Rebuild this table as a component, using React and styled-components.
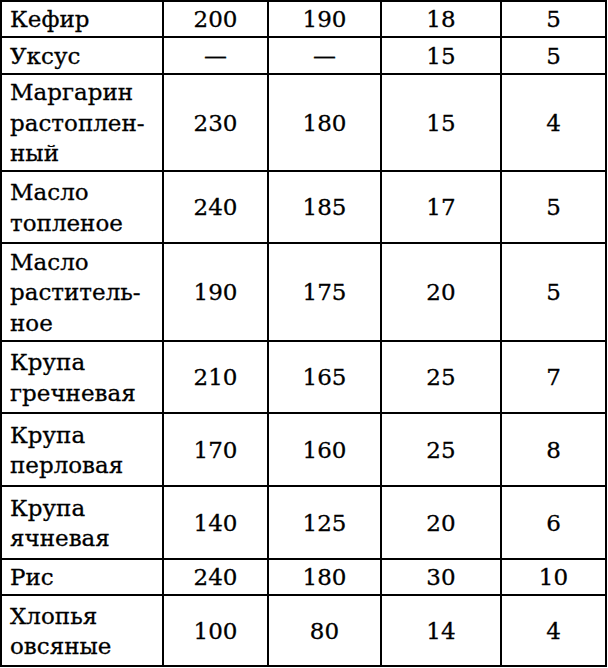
import React from 'react';
import styled, { createGlobalStyle } from 'styled-components';

const GlobalStyle = createGlobalStyle`
  html, body {
    margin: 0;
    padding: 0;
    background: #fff;
  }
`;

const Table = styled.table`
  border-collapse: collapse;
  table-layout: fixed;
  width: 607px;
  font-family: "DejaVu Serif", "Liberation Serif", serif;
  font-size: 23px;
  line-height: 30.5px;
  color: #000;
  -webkit-text-stroke: 0.3px #000;
`;

const Row = styled.tr`
  height: ${p => p.h}px;
`;

const NameCell = styled.td`
  border: 2px solid #000;
  padding: 1px 4px 0 8px;
  vertical-align: middle;
  text-align: left;
  white-space: pre-line;
`;

const NumCell = styled.td`
  border: 2px solid #000;
  padding: 1px 0 0;
  vertical-align: middle;
  text-align: center;
`;

const rows = [
  { name: 'Кефир', v: ['200', '190', '18', '5'], h: 36 },
  { name: 'Уксус', v: ['—', '—', '15', '5'], h: 37 },
  { name: 'Маргарин\nрастоплен-\nный', v: ['230', '180', '15', '4'], h: 97 },
  { name: 'Масло\nтопленое', v: ['240', '185', '17', '5'], h: 72 },
  { name: 'Масло\nраститель-\nное', v: ['190', '175', '20', '5'], h: 98 },
  { name: 'Крупа\nгречневая', v: ['210', '165', '25', '7'], h: 72 },
  { name: 'Крупа\nперловая', v: ['170', '160', '25', '8'], h: 73 },
  { name: 'Крупа\nячневая', v: ['140', '125', '20', '6'], h: 73 },
  { name: 'Рис', v: ['240', '180', '30', '10'], h: 36 },
  { name: 'Хлопья\nовсяные', v: ['100', '80', '14', '4'], h: 71 },
];

const widths = [162, 105, 113, 120, 105];

export default function App() {
  return (
    <>
      <GlobalStyle />
      <Table>
        <colgroup>
          {widths.map((w, i) => <col key={i} style={{ width: w }} />)}
        </colgroup>
        <tbody>
          {rows.map((r, i) => (
            <Row key={i} h={r.h}>
              <NameCell>{r.name}</NameCell>
              {r.v.map((v, j) => <NumCell key={j}>{v}</NumCell>)}
            </Row>
          ))}
        </tbody>
      </Table>
    </>
  );
}
